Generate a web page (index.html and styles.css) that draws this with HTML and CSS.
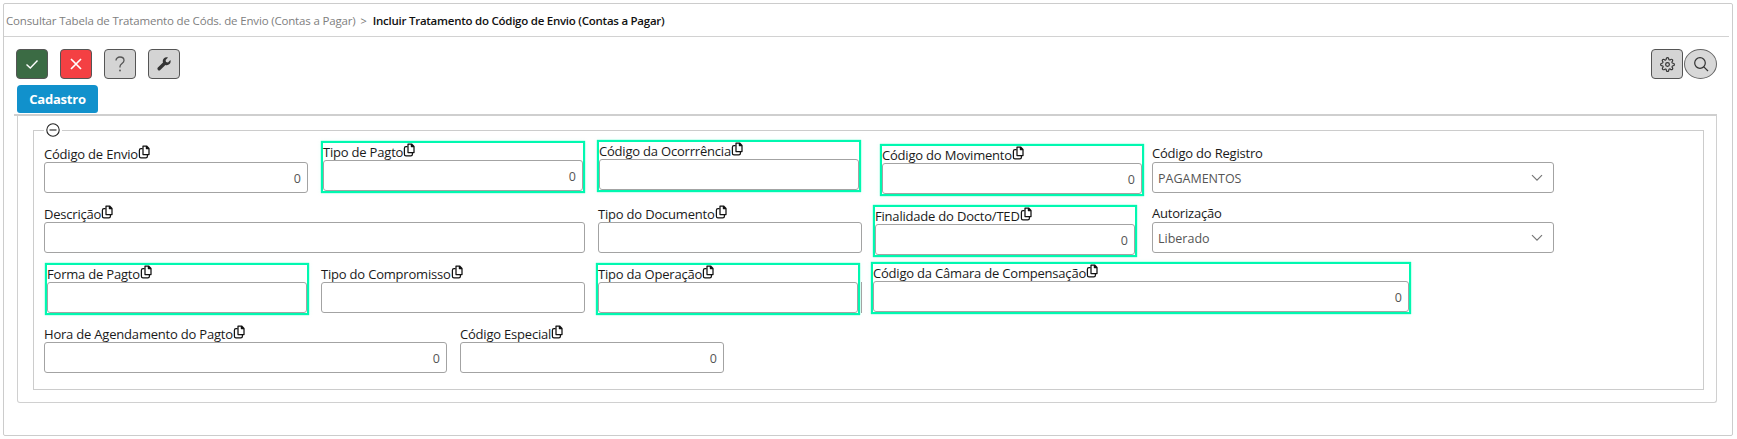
FILE: index.html
```html
<!DOCTYPE html>
<html lang="pt-BR">
<head>
<meta charset="utf-8">
<title>Incluir Tratamento do Código de Envio</title>
<link rel="stylesheet" href="styles.css">
</head>
<body>
<svg class="defs" width="0" height="0" aria-hidden="true">
  <symbol id="copy" viewBox="0 0 12 14">
    <path d="M5 1h3.600L11 3.400V9.500H5z M8.400 1v2.600H11" fill="#fff" stroke="#111" stroke-width="1.250" stroke-linejoin="round"/>
    <path d="M4.600 3.600H3a1.600 1.600 0 0 0-1.600 1.600v6a1.600 1.600 0 0 0 1.600 1.600h4.800a1.600 1.600 0 0 0 1.600-1.600V9.800" fill="none" stroke="#111" stroke-width="1.250"/>
  </symbol>
  <symbol id="chev" viewBox="0 0 12 8"><path d="M1 1.200l5 5 5-5" fill="none" stroke="#777" stroke-width="1.200"/></symbol>
</svg>
<main class="frame">
  <nav class="crumbs">
    <span class="crumb">Consultar Tabela de Tratamento de Códs. de Envio (Contas a Pagar)</span>
    <span class="sep">&gt;</span>
    <strong class="current">Incluir Tratamento do Código de Envio (Contas a Pagar)</strong>
  </nav>
  <div class="toolbar">
    <button class="btn ok" aria-label="Confirmar"><svg width="16" height="16" viewBox="0 0 16 16"><path d="M2.500 8.500l3.800 3.600L13.500 4.500" fill="none" stroke="#fff" stroke-width="1.400"/></svg></button>
    <button class="btn cancel" aria-label="Cancelar"><svg width="16" height="16" viewBox="0 0 16 16"><path d="M3 3l10 10M13 3L3 13" fill="none" stroke="#fff" stroke-width="1.700"/></svg></button>
    <button class="btn help" aria-label="Ajuda"><svg width="16" height="18" viewBox="0 0 16 18"><path d="M4 5.500C4 3.200 5.800 2 8 2s4 1.300 4 3.400c0 2.900-4 3.200-4 6.100V12.500" fill="none" stroke="#555" stroke-width="1.300"/><circle cx="8" cy="15.500" r=".9" fill="#555"/></svg></button>
    <button class="btn tool" aria-label="Ferramentas"><svg width="14" height="14" viewBox="0 0 14 14"><path d="M13.400 3.100l-2.400 2.300-2-.4-.4-2L11 .6C9.500 0 7.800.4 6.800 1.500 5.700 2.600 5.500 4.200 6 5.500L.9 10.600a1.700 1.700 0 0 0 2.400 2.400L8.400 7.900c1.400.5 3 .3 4.100-.8 1.100-1.100 1.400-2.600.9-4z" fill="#333"/></svg></button>
    <div class="tool-end">
      <button class="btn config" aria-label="Configurações"><svg width="15" height="15" viewBox="0 0 24 24" fill="none" stroke="#333" stroke-width="1.900"><circle cx="12" cy="12" r="3"/><path d="M19.400 15a1.650 1.650 0 0 0 .33 1.820l.06.06a2 2 0 1 1-2.830 2.830l-.06-.06a1.650 1.650 0 0 0-2.820 1.170V21a2 2 0 0 1-4 0v-.09a1.650 1.650 0 0 0-2.820-1.170l-.06.06a2 2 0 1 1-2.830-2.830l.06-.06A1.650 1.650 0 0 0 3.090 14H3a2 2 0 0 1 0-4h.09a1.650 1.650 0 0 0 1.170-2.820l-.06-.06a2 2 0 1 1 2.830-2.830l.06.06A1.650 1.650 0 0 0 10 3.090V3a2 2 0 0 1 4 0v.09a1.650 1.650 0 0 0 2.820 1.170l.06-.06a2 2 0 1 1 2.830 2.830l-.06.06A1.650 1.650 0 0 0 20.910 10H21a2 2 0 0 1 0 4h-.09a1.650 1.650 0 0 0-1.510 1z"/></svg></button>
      <button class="btn search" aria-label="Pesquisar"><svg width="16" height="16" viewBox="0 0 16 16" fill="none" stroke="#333" stroke-width="1.200"><circle cx="7" cy="7" r="5.300"/><path d="M10.800 10.800L15 15"/></svg></button>
    </div>
  </div>
  <div class="tab">Cadastro</div>
  <section class="panel">
    <fieldset class="group">
      <legend class="legend"><svg width="14" height="14" viewBox="0 0 14 14" fill="none" stroke="#222" stroke-width="1.100"><circle cx="7" cy="7" r="6.200"/><path d="M3.500 7h7"/></svg></legend>

      <div class="row row-1">
        <div class="field f-envio"><label class="lbl">Código de Envio<svg class="ico"><use href="#copy"/></svg></label><div class="inp num">0</div></div>
        <div class="field mark f-pagto"><label class="lbl">Tipo de Pagto<svg class="ico"><use href="#copy"/></svg></label><div class="inp num">0</div></div>
        <div class="field mark f-ocorr"><label class="lbl">Código da Ocorrrência<svg class="ico"><use href="#copy"/></svg></label><div class="inp"></div></div>
        <div class="field mark f-mov"><label class="lbl">Código do Movimento<svg class="ico"><use href="#copy"/></svg></label><div class="inp num">0</div></div>
        <div class="field f-registro"><label class="lbl lbl-plain">Código do Registro</label><div class="inp sel">PAGAMENTOS<svg class="chev"><use href="#chev"/></svg></div></div>
      </div>

      <div class="row row-2">
        <div class="field f-desc"><label class="lbl">Descrição<svg class="ico"><use href="#copy"/></svg></label><div class="inp"></div></div>
        <div class="field f-doc"><label class="lbl">Tipo do Documento<svg class="ico"><use href="#copy"/></svg></label><div class="inp"></div></div>
        <div class="field mark f-final"><label class="lbl">Finalidade do Docto/TED<svg class="ico"><use href="#copy"/></svg></label><div class="inp num">0</div></div>
        <div class="field f-aut"><label class="lbl lbl-plain">Autorização</label><div class="inp sel">Liberado<svg class="chev"><use href="#chev"/></svg></div></div>
      </div>

      <div class="row row-3">
        <div class="field mark f-forma"><label class="lbl">Forma de Pagto<svg class="ico"><use href="#copy"/></svg></label><div class="inp"></div></div>
        <div class="field f-comp"><label class="lbl">Tipo do Compromisso<svg class="ico"><use href="#copy"/></svg></label><div class="inp"></div></div>
        <div class="field mark f-oper"><label class="lbl">Tipo da Operação<svg class="ico"><use href="#copy"/></svg></label><div class="inp"></div></div>
        <div class="field mark f-camara"><label class="lbl">Código da Câmara de Compensação<svg class="ico"><use href="#copy"/></svg></label><div class="inp num">0</div></div>
      </div>

      <div class="row row-4">
        <div class="field f-hora"><label class="lbl">Hora de Agendamento do Pagto<svg class="ico"><use href="#copy"/></svg></label><div class="inp num">0</div></div>
        <div class="field f-esp"><label class="lbl">Código Especial<svg class="ico"><use href="#copy"/></svg></label><div class="inp num">0</div></div>
      </div>
    </fieldset>
  </section>
</main>
</body>
</html>
```

FILE: styles.css
```css
* { box-sizing: border-box; }
html, body { margin: 0; padding: 0; background: #fff; }
body { font-family: "Open Sans", "Noto Sans", sans-serif; font-size: 13px; color: #222; overflow: hidden; }
.defs { position: absolute; }

.frame { margin: 3px 4px 0 3px; height: 433px; border: 1px solid #ccc; border-radius: 2px; }

.crumbs { display: flex; align-items: center; height: 33px; margin-right: 3px; padding-left: 2px; border-bottom: 1px solid #d2d2d2; font-size: 11.5px; white-space: nowrap; }
.crumb { color: #808080; letter-spacing: -.17px; }
.sep { color: #777; margin: 0 6px 0 5px; font-size: 11px; }
.current { color: #111; font-weight: 600; letter-spacing: -.25px; }

.toolbar { display: flex; gap: 12px; margin: 12px 15px 0 12px; height: 30px; }
.tool-end { display: flex; gap: 1px; margin-left: auto; }
.btn { display: flex; align-items: center; justify-content: center; width: 32px; height: 30px; padding: 0; border: 1px solid #555; border-radius: 4px; background: #d4d4d4; }
.ok { background: #3b6b44; }
.cancel { background: #f44043; }
.search { width: 33px; border-radius: 50%; background: #d8d8d8; border-color: #666; }

.tab { width: 81px; height: 28px; margin: 6px 0 0 13px; border-radius: 4px 4px 3px 3px; background: #1191cc; color: #fff; font-weight: 700; font-size: 13px; letter-spacing: -.2px; line-height: 28px; text-align: center; }

.panel { height: 289px; margin: 1px 15px 0 13px; padding: 7px 12px 0 15px; border: 1px solid #d0d0d0; border-top: 2px solid #cfcfcf; border-radius: 0 0 3px 3px; position: relative; }
.panel::before { content: ""; position: absolute; left: -4px; top: -2px; width: 4px; height: 2px; background: #cfcfcf; }

.group { height: 267px; margin: 0; min-width: 0; padding: 0 0 0 10px; border: 1px solid #ccc; border-radius: 0; }
.legend { margin-left: 0; padding: 0 2px; height: 14px; line-height: 0; }
.legend svg { display: block; }

.row { display: flex; align-items: flex-start; }
.row-1 { margin-top: 3px; }
.row-2 { margin-top: 9px; }
.row-3 { margin-top: 5px; }
.row-4 { margin-top: 10px; }

.field { flex: none; position: relative; }
.lbl { display: block; height: 17px; line-height: 13px; letter-spacing: -.2px; white-space: nowrap; color: #1a1a1a; }
.lbl-plain { padding-top: 2px; }
.ico { width: 12px; height: 14px; vertical-align: 0; }
.inp { height: 31px; padding: 0 6px; line-height: 31px; border: 1px solid #a3a3a3; border-radius: 3px; background: #fff; font-size: 12.5px; color: #555; }
.num { text-align: right; padding-right: 6px; }
.sel { position: relative; padding-left: 5px; }
.chev { position: absolute; right: 10px; top: 11px; width: 12px; height: 8px; }

.mark { width: 264px; border: 2px solid #00f8b0; box-shadow: 0 0 1px #00f8b0, 0 0 5px rgba(0, 248, 176, .08); }

.f-envio { width: 264px; margin-top: 5px; }
.f-pagto { margin: 1px 0 0 13px; }
.f-ocorr { margin: 0 0 0 12px; }
.f-mov { margin: 4px 0 0 19px; }
.f-registro { width: 402px; margin: 5px 0 0 8px; }

.f-desc { width: 541px; }
.f-doc { width: 264px; margin-left: 13px; }
.f-final { margin-left: 11px; }
.f-aut { width: 402px; margin-left: 15px; }

.f-forma { margin: 1px 0 0 1px; }
.f-comp { width: 264px; margin: 3px 0 0 12px; }
.f-oper { margin: 1px 0 0 11px; }
.f-oper::after { content: ""; position: absolute; right: -4px; top: 17px; height: 31px; width: 1px; background: #a3a3a3; }
.f-camara { width: 540px; margin-left: 11px; }

.f-hora { width: 403px; }
.f-esp { width: 264px; margin-left: 13px; }
```
